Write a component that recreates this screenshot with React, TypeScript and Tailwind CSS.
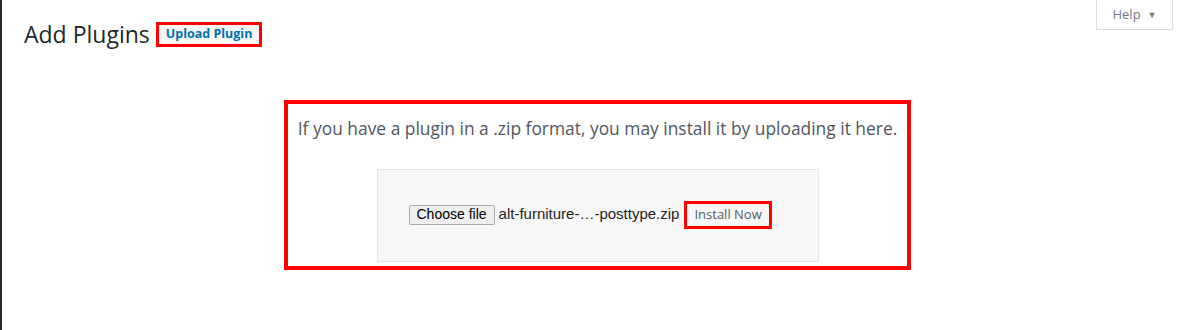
export default function App() {
  return (
    <div className="h-[330px] w-full bg-white border-l-2 border-[#23282d] font-['Open_Sans',sans-serif] text-[#23282d]">
      <div className="flex items-start justify-between pr-5">
        <div className="flex items-center pl-[22px] pt-[19px]">
          <h1 className="text-[23px] leading-[30px] font-normal">Add Plugins</h1>
          <div className="ml-[6px] border-[3px] border-[#ff0000] bg-[#f7f7f7] px-[7px] h-[25px] flex items-center">
            <span className="text-[12.5px] font-bold text-[#0073aa]">Upload Plugin</span>
          </div>
        </div>
        <button className="w-[77px] h-[30px] border border-t-0 border-[#dddddd] bg-white flex items-center justify-center gap-[7px] text-[13px] text-[#72777c]">
          Help
          <span className="text-[9px]">▼</span>
        </button>
      </div>

      <div className="mx-auto mt-[51px] w-[627px] h-[170px] border-4 border-[#ff0000] flex flex-col items-center">
        <p className="mt-[12px] text-[17.4px] leading-[24px] text-[#50575e]">
          If you have a plugin in a .zip format, you may install it by uploading it here.
        </p>
        <div className="mt-[29px] w-[442px] h-[93px] bg-[#f7f7f7] border border-[#e5e5e5] flex items-center pl-[31px] pb-[2px]">
          <div className="flex items-center">
            <span className="h-[20px] px-[7px] border border-[#a9a9a9] rounded-[2px] bg-[#efefef] flex items-center font-['Liberation_Sans',sans-serif] text-[14px] text-black">
              Choose file
            </span>
            <span className="ml-[4px] font-['Liberation_Sans',sans-serif] text-[15px] text-[#222]">
              alt-furniture-…-posttype.zip
            </span>
            <div className="ml-[5px] h-[28px] px-[7px] border-[3px] border-[#ff0000] bg-[#f7f7f7] flex items-center">
              <span className="text-[13px] text-[#555d66]">Install Now</span>
            </div>
          </div>
        </div>
      </div>
    </div>
  );
}
